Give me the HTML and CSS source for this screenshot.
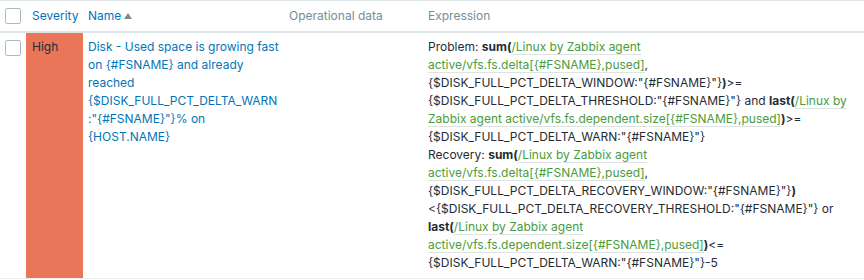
FILE: index.html
```html
<!DOCTYPE html>
<html>
<head>
<meta charset="utf-8">
<link rel="stylesheet" href="styles.css">
</head>
<body>
<div class="table">
  <div class="row head">
    <div class="cell cb"><span class="checkbox"></span></div>
    <div class="cell sev"><span class="sort">Severity</span></div>
    <div class="cell name"><span class="sort">Name</span><span class="arrow"></span></div>
    <div class="cell opdata"><span class="plain">Operational data</span></div>
    <div class="cell expr"><span class="plain">Expression</span></div>
  </div>
  <div class="row body">
    <div class="cell cb"><span class="checkbox"></span></div>
    <div class="cell sev high">High</div>
    <div class="cell name"><a class="trig">Disk - Used space is growing fast on {#FSNAME} and already reached {$DISK_FULL_PCT_DELTA_WARN:"{#FSNAME}"}% on {HOST.NAME}</a></div>
    <div class="cell opdata"></div>
    <div class="cell expr">
      <div>Problem: <b>sum(</b><span class="item">/Linux by Zabbix agent active/vfs.fs.delta[{#FSNAME},pused]</span>,{$DISK_FULL_PCT_DELTA_WINDOW:"{#FSNAME}"}<b>)</b>&gt;={$DISK_FULL_PCT_DELTA_THRESHOLD:"{#FSNAME}"} and <b>last(</b><span class="item">/Linux by Zabbix agent active/vfs.fs.dependent.size[{#FSNAME},pused]</span><b>)</b>&gt;={$DISK_FULL_PCT_DELTA_WARN:"{#FSNAME}"}</div>
      <div>Recovery: <b>sum(</b><span class="item">/Linux by Zabbix agent active/vfs.fs.delta[{#FSNAME},pused]</span>,{$DISK_FULL_PCT_DELTA_RECOVERY_WINDOW:"{#FSNAME}"}<b>)</b>&lt;{$DISK_FULL_PCT_DELTA_RECOVERY_THRESHOLD:"{#FSNAME}"} or <b>last(</b><span class="item">/Linux by Zabbix agent active/vfs.fs.dependent.size[{#FSNAME},pused]</span><b>)</b>&lt;={$DISK_FULL_PCT_DELTA_WARN:"{#FSNAME}"}-5</div>
    </div>
  </div>
</div>
</body>
</html>
```

FILE: styles.css
```css
html, body {
  margin: 0;
  padding: 0;
  background: #ffffff;
}
body {
  font-family: Inter, "Noto Sans", Arial, sans-serif;
  font-size: 12px;
  line-height: 18px;
  color: #1f2c33;
}
.table {
  width: 864px;
  border-top: 1px solid #dfe4e7;
}
.row {
  display: grid;
  grid-template-columns: 26px 57px 201px 139px 1fr;
}
.head {
  height: 30px;
  border-bottom: 2px solid #dfe4e7;
  align-items: center;
}
.body {
  border-bottom: 1px solid #ebeef0;
  min-height: 245px;
}
.cell {
  padding: 0 6px 0 5px;
  min-width: 0;
}
.cb {
  padding: 0 0 0 5px;
}
.name {
  padding-right: 5px;
}
.head .cell {
  display: flex;
  align-items: center;
}
.checkbox {
  display: block;
  box-sizing: border-box;
  width: 16px;
  height: 16px;
  border: 1px solid #acbbc2;
  border-radius: 2px;
  background: #fff;
}
.body .checkbox {
  margin-top: 7px;
}
.sev {
  padding-left: 6px;
}
.sort {
  color: #0275b8;
}
.plain {
  color: #768d99;
}
.arrow {
  display: inline-block;
  width: 0;
  height: 0;
  margin-left: 3px;
  margin-top: -1px;
  border-left: 4px solid transparent;
  border-right: 4px solid transparent;
  border-bottom: 6px solid #768d99;
}
.body .cell {
  padding-top: 5px;
  padding-bottom: 6px;
}
.body .cb {
  padding-top: 0;
}
.high {
  background: #e97659;
  color: #1f2c33;
}
.trig {
  color: #0275b8;
  overflow-wrap: break-word;
  word-break: break-word;
}
.expr b {
  font-weight: bold;
}
.item {
  color: #4a9c3c;
  border-bottom: 1px solid #dde2e5;
}
```
